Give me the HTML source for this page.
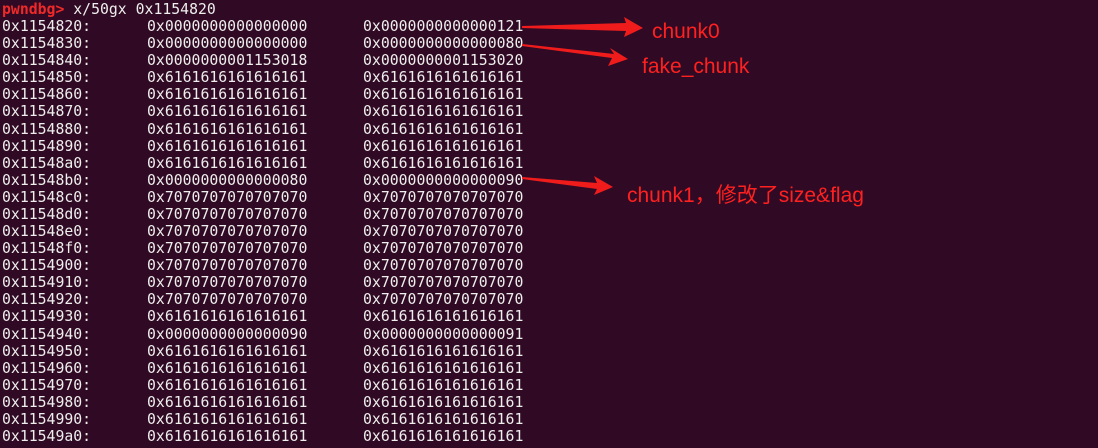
<!DOCTYPE html><html><head><meta charset="utf-8"><style>
html,body{margin:0;padding:0;width:1098px;height:448px;background:#300a24;overflow:hidden}
.l{position:absolute;font-family:"DejaVu Sans Mono","Liberation Mono",monospace;font-size:14.8px;color:#eeeeec;white-space:pre;line-height:17px}
.a{left:2px}.b{left:147px}.c{left:363px}
.p{color:#ef2929;font-weight:bold}
.t{position:absolute;font-family:"Liberation Sans","Noto Sans CJK SC",sans-serif;font-size:21px;color:#ff2020;white-space:pre}
</style></head><body>
<div id="w"></div>
<svg width="1098" height="448" style="position:absolute;left:0;top:0">
<g fill="#f01c1c">
<polygon points="522,26 626,23 624,17 643,28 624,37 626,31 522,28"/>
<polygon points="522,44 614,54 610,48 628,59 608,66 612,58 522,46"/>
<polygon points="522,177 597,183 594,176 613,187 594,195 597,189 522,179"/>
</g></svg>
<div class="t" style="left:652px;top:20px">chunk0</div>
<div class="t" style="left:642px;top:55px">fake_chunk</div>
<div class="t" style="left:627px;top:179px">chunk1，修改了size&amp;flag</div>
<script>
var rows=[["0x1154820:","0x0000000000000000","0x0000000000000121"],["0x1154830:","0x0000000000000000","0x0000000000000080"],["0x1154840:","0x0000000001153018","0x0000000001153020"]];
var A="0x6161616161616161",P="0x7070707070707070";
var addrs=["850","860","870","880","890","8a0","8b0","8c0","8d0","8e0","8f0","900","910","920","930","940","950","960","970","980","990","9a0"];
addrs.forEach(function(s){var a="0x1154"+s+":";var b,c;
if(s=="8b0"){b="0x0000000000000080";c="0x0000000000000090"}
else if(s=="940"){b="0x0000000000000090";c="0x0000000000000091"}
else if(s>="8c0"&&s<="920"){b=P;c=P}else{b=A;c=A}
rows.push([a,b,c])});
var h='<div class="l a" style="top:1px"><span class="p">pwndbg&gt;</span> x/50gx 0x1154820</div>';
rows.forEach(function(r,i){var y=1+(i+1)*17.08;
h+='<div class="l a" style="top:'+y+'px">'+r[0]+'</div><div class="l b" style="top:'+y+'px">'+r[1]+'</div><div class="l c" style="top:'+y+'px">'+r[2]+'</div>'});
document.getElementById('w').innerHTML=h;
</script>
</body></html>
